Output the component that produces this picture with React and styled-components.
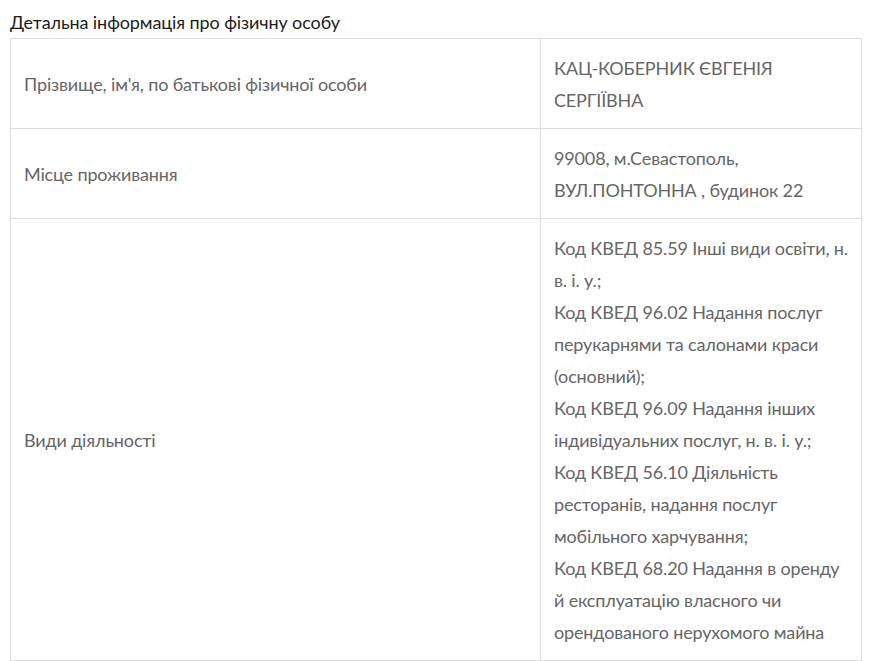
import React from "react";
import styled, { createGlobalStyle } from "styled-components";

const GlobalStyle = createGlobalStyle`
  html, body { margin: 0; padding: 0; background: #fff; }
  body { font-family: Lato, "Liberation Sans", sans-serif; }
`;

const Page = styled.div`
  padding: 10px 11px 0 10px;
`;

const Title = styled.h2`
  margin: 0 0 4px 0;
  font-family: Lato, "Liberation Sans", sans-serif;
  font-weight: 400;
  font-size: 18px;
  line-height: 24px;
  letter-spacing: -0.1px;
  color: #1c1c1c;
`;

const Table = styled.table`
  width: 851px;
  border-collapse: collapse;
  table-layout: fixed;
  font-family: Lato, "Liberation Sans", sans-serif;
  font-size: 18px;
  line-height: 32px;
  letter-spacing: -0.15px;
  color: #666;
`;

const Col = styled.col`
  width: ${p => p.$w};
`;

const Cell = styled.td`
  box-sizing: border-box;
  border: 1px solid #dddddd;
  padding: 13px 11px 12px 13px;
  vertical-align: middle;
  height: ${p => p.$h || "auto"};
`;

const Line = styled.div`
  display: block;
`;

const rows = [
  {
    label: "Прізвище, ім'я, по батькові фізичної особи",
    value: ["КАЦ-КОБЕРНИК ЄВГЕНІЯ СЕРГІЇВНА"],
  },
  {
    label: "Місце проживання",
    value: ["99008, м.Севастополь, ВУЛ.ПОНТОННА , будинок 22"],
  },
  {
    label: "Види діяльності",
    value: [
      "Код КВЕД 85.59 Інші види освіти, н. в. і. у.;",
      "Код КВЕД 96.02 Надання послуг перукарнями та салонами краси (основний);",
      "Код КВЕД 96.09 Надання інших індивідуальних послуг, н. в. і. у.;",
      "Код КВЕД 56.10 Діяльність ресторанів, надання послуг мобільного харчування;",
      "Код КВЕД 68.20 Надання в оренду й експлуатацію власного чи орендованого нерухомого майна",
    ],
  },
];

export default function App() {
  return (
    <>
      <GlobalStyle />
      <Page>
        <Title>Детальна інформація про фізичну особу</Title>
        <Table>
          <colgroup>
            <Col $w="530px" />
            <Col $w="321px" />
          </colgroup>
          <tbody>
            {rows.map((r) => (
              <tr key={r.label}>
                <Cell>{r.label}</Cell>
                <Cell>
                  {r.value.map((v) => (
                    <Line key={v}>{v}</Line>
                  ))}
                </Cell>
              </tr>
            ))}
            <tr>
              <Cell $h="20px"></Cell>
              <Cell $h="20px"></Cell>
            </tr>
          </tbody>
        </Table>
      </Page>
    </>
  );
}
